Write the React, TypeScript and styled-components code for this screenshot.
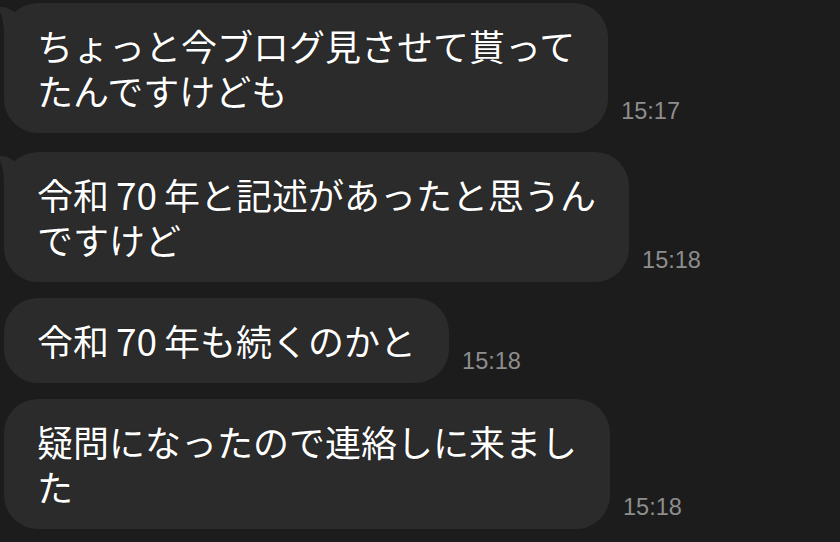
import React from "react";
import styled, { createGlobalStyle } from "styled-components";

const Global = createGlobalStyle`
  html, body { margin: 0; padding: 0; background: #1c1c1c; }
  body { width: 840px; height: 542px; overflow: hidden; }
`;

const Page = styled.div`
  display: flex;
  flex-direction: column;
  padding: 3px 0 0 4px;
  gap: 16px;
`;

const Row = styled.div<{ $tail?: boolean }>`
  display: flex;
  align-items: flex-end;
  gap: 13px;
  margin-top: ${(p) => (p.$tail ? "3px" : "0")};
  &:first-child { margin-top: 0; }
`;

const Bubble = styled.div`
  position: relative;
  background: #2b2b2b;
  border-radius: 34px;
  padding: 20px 33px;
  color: #ffffff;
  font-family: "Noto Sans CJK JP", "Noto Sans", sans-serif;
  font-size: 36px;
  line-height: 45px;
  white-space: nowrap;
  text-shadow: 0 0 1px rgba(0, 0, 0, 0.8);
`;

const Num = styled.span`
  margin: 0 7px;
  font-size: 37px;
`;

const Tail = styled.svg`
  position: absolute;
  left: -10px;
  top: 0;
  width: 30px;
  height: 40px;
  overflow: visible;
`;

const Time = styled.div`
  font-family: "Liberation Sans", Arial, sans-serif;
  font-size: 23.5px;
  line-height: 1;
  color: #8e8e8e;
  margin-bottom: 10px;
  white-space: nowrap;
`;

const TailShape = () => (
  <Tail viewBox="0 0 30 40" aria-hidden="true">
    <path d="M3 4 C 11 3, 17 6, 24 12 L 10 36 C 10 22, 9 12, 3 4 Z" fill="#2b2b2b" />
  </Tail>
);

export default function App() {
  return (
    <>
      <Global />
      <Page>
        <Row $tail>
          <Bubble>
            <TailShape />
            ちょっと今ブログ見させて貰って
            <br />
            たんですけども
          </Bubble>
          <Time>15:17</Time>
        </Row>
        <Row $tail>
          <Bubble>
            <TailShape />
            令和<Num>70</Num>年と記述があったと思うん
            <br />
            ですけど
          </Bubble>
          <Time>15:18</Time>
        </Row>
        <Row>
          <Bubble>
            令和<Num>70</Num>年も続くのかと
          </Bubble>
          <Time>15:18</Time>
        </Row>
        <Row>
          <Bubble>
            疑問になったので連絡しに来まし
            <br />た
          </Bubble>
          <Time>15:18</Time>
        </Row>
      </Page>
    </>
  );
}
